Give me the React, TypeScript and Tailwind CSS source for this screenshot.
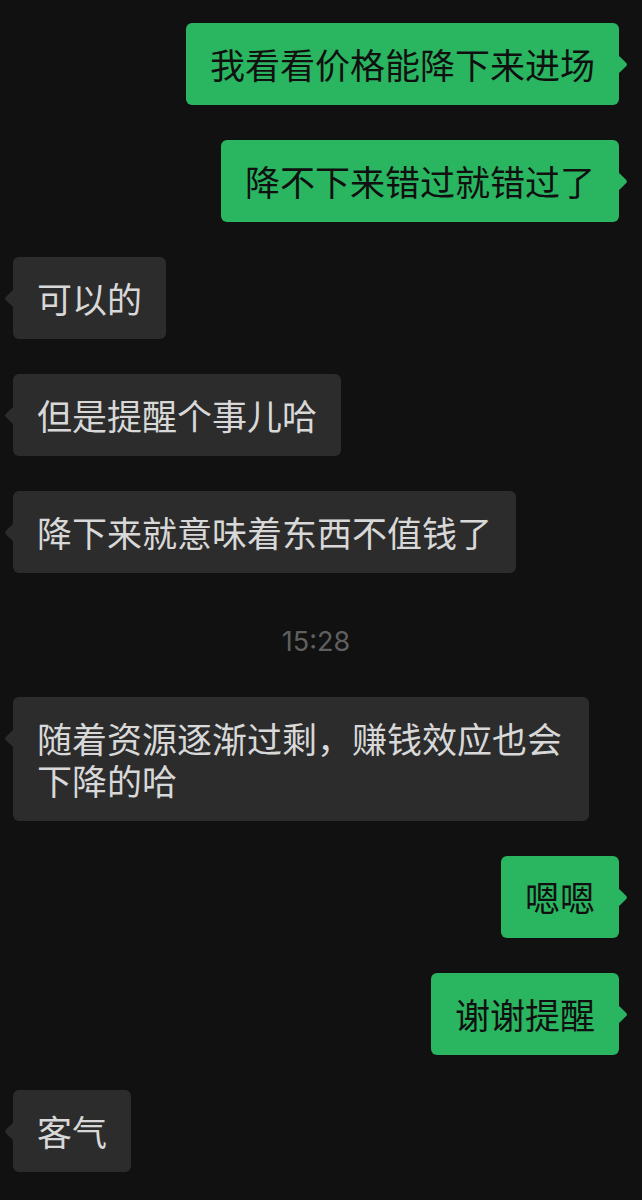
import React from "react";

type Msg =
  | { kind: "me" | "them"; text: string }
  | { kind: "time"; text: string };

const messages: Msg[] = [
  { kind: "me", text: "我看看价格能降下来进场" },
  { kind: "me", text: "降不下来错过就错过了" },
  { kind: "them", text: "可以的" },
  { kind: "them", text: "但是提醒个事儿哈" },
  { kind: "them", text: "降下来就意味着东西不值钱了" },
  { kind: "time", text: "15:28" },
  { kind: "them", text: "随着资源逐渐过剩，赚钱效应也会下降的哈" },
  { kind: "me", text: "嗯嗯" },
  { kind: "me", text: "谢谢提醒" },
  { kind: "them", text: "客气" },
];

const Bubble: React.FC<{ mine: boolean; text: string }> = ({ mine, text }) => {
  return (
    <div
      className={`relative max-w-[576px] rounded-[6px] px-[24px] py-[20px] text-[35px] leading-[42px] ${
        mine
          ? "self-end bg-[#2ab560] text-[#101010]"
          : "self-start bg-[#2c2c2c] text-[#d8d8d8]"
      }`}
    >
      <span
        className={`absolute top-[35px] h-[13px] w-[13px] rotate-45 rounded-[2px] ${
          mine ? "right-[-6px] bg-[#2ab560]" : "left-[-6px] bg-[#2c2c2c]"
        }`}
      />
      <span className="relative">{text}</span>
    </div>
  );
};

export default function App() {
  return (
    <div
      className="min-h-[1200px] w-[642px] overflow-hidden bg-[#111111]"
      style={{ fontFamily: '"Noto Sans CJK SC", "Noto Sans", sans-serif' }}
    >
      <div className="flex flex-col gap-[35px] pl-[13px] pr-[23px] pt-[23px]">
        {messages.map((m, idx) =>
          m.kind === "time" ? (
            <div
              key={idx}
              className="pt-[20px] pb-[6px] text-center text-[27px] leading-[28px] text-[#5f5f5f]"
              style={{ fontFamily: '"Inter", "Liberation Sans", sans-serif' }}
            >
              {m.text}
            </div>
          ) : (
            <Bubble key={idx} mine={m.kind === "me"} text={m.text} />
          )
        )}
      </div>
    </div>
  );
}
